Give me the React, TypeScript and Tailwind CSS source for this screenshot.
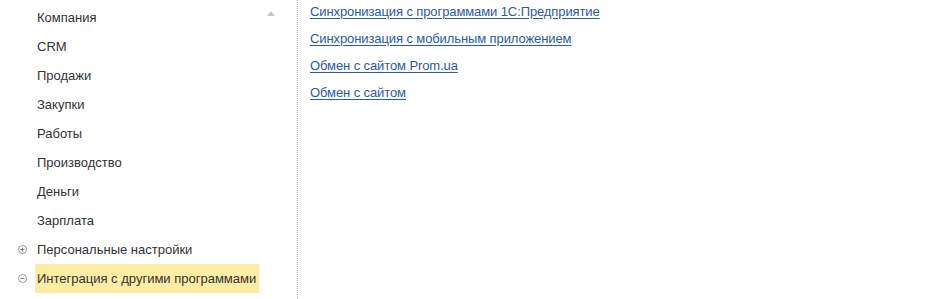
import React from "react";

const SECTIONS = [
  { label: "Компания" },
  { label: "CRM" },
  { label: "Продажи" },
  { label: "Закупки" },
  { label: "Работы" },
  { label: "Производство" },
  { label: "Деньги" },
  { label: "Зарплата" },
  { label: "Персональные настройки", toggle: "plus" },
  { label: "Интеграция с другими программами", toggle: "minus", active: true },
];

const LINKS = [
  "Синхронизация с программами 1С:Предприятие",
  "Синхронизация с мобильным приложением",
  "Обмен с сайтом Prom.ua",
  "Обмен с сайтом",
];

function ToggleIcon({ kind }: { kind: string }) {
  return (
    <svg width="9" height="9" viewBox="0 0 9 9" className="shrink-0">
      <circle cx="4.5" cy="4.5" r="4" fill="none" stroke="#9a9a9a" strokeWidth="1" />
      <path d="M2.5 4.5h4" stroke="#7a7a7a" strokeWidth="1" />
      {kind === "plus" && <path d="M4.5 2.5v4" stroke="#7a7a7a" strokeWidth="1" />}
    </svg>
  );
}

export default function App() {
  return (
    <div className="flex h-[299px] w-[935px] bg-white font-['Liberation_Sans',Arial,sans-serif] text-[13px] overflow-hidden">
      {/* Sections list */}
      <div className="relative w-[298px] shrink-0 border-r border-dotted border-[#b8b8b8] pt-[3px]">
        <div className="absolute left-[267px] top-[11px] h-0 w-0 border-x-[4px] border-b-[5px] border-x-transparent border-b-[#c4c4c4]" />
        {SECTIONS.map((s) => (
          <div key={s.label} className="flex h-[29px] items-center">
            <div className="flex w-[35px] justify-end pr-[8px]">
              {s.toggle && <ToggleIcon kind={s.toggle} />}
            </div>
            <span
              className={
                s.active
                  ? "flex h-[29px] items-center bg-[#fbeda4] pl-[2px] pr-[3px] text-[#333333]"
                  : "pl-[2px] text-[#333333]"
              }
            >
              {s.label}
            </span>
          </div>
        ))}
      </div>

      {/* Commands */}
      <div className="flex flex-col gap-[12px] pl-[12px] pt-[4px]">
        {LINKS.map((l) => (
          <a
            key={l}
            href="#"
            className="leading-[15px] tracking-[-0.1px] text-[#2b5aa7] underline underline-offset-2"
          >
            {l}
          </a>
        ))}
      </div>
    </div>
  );
}
